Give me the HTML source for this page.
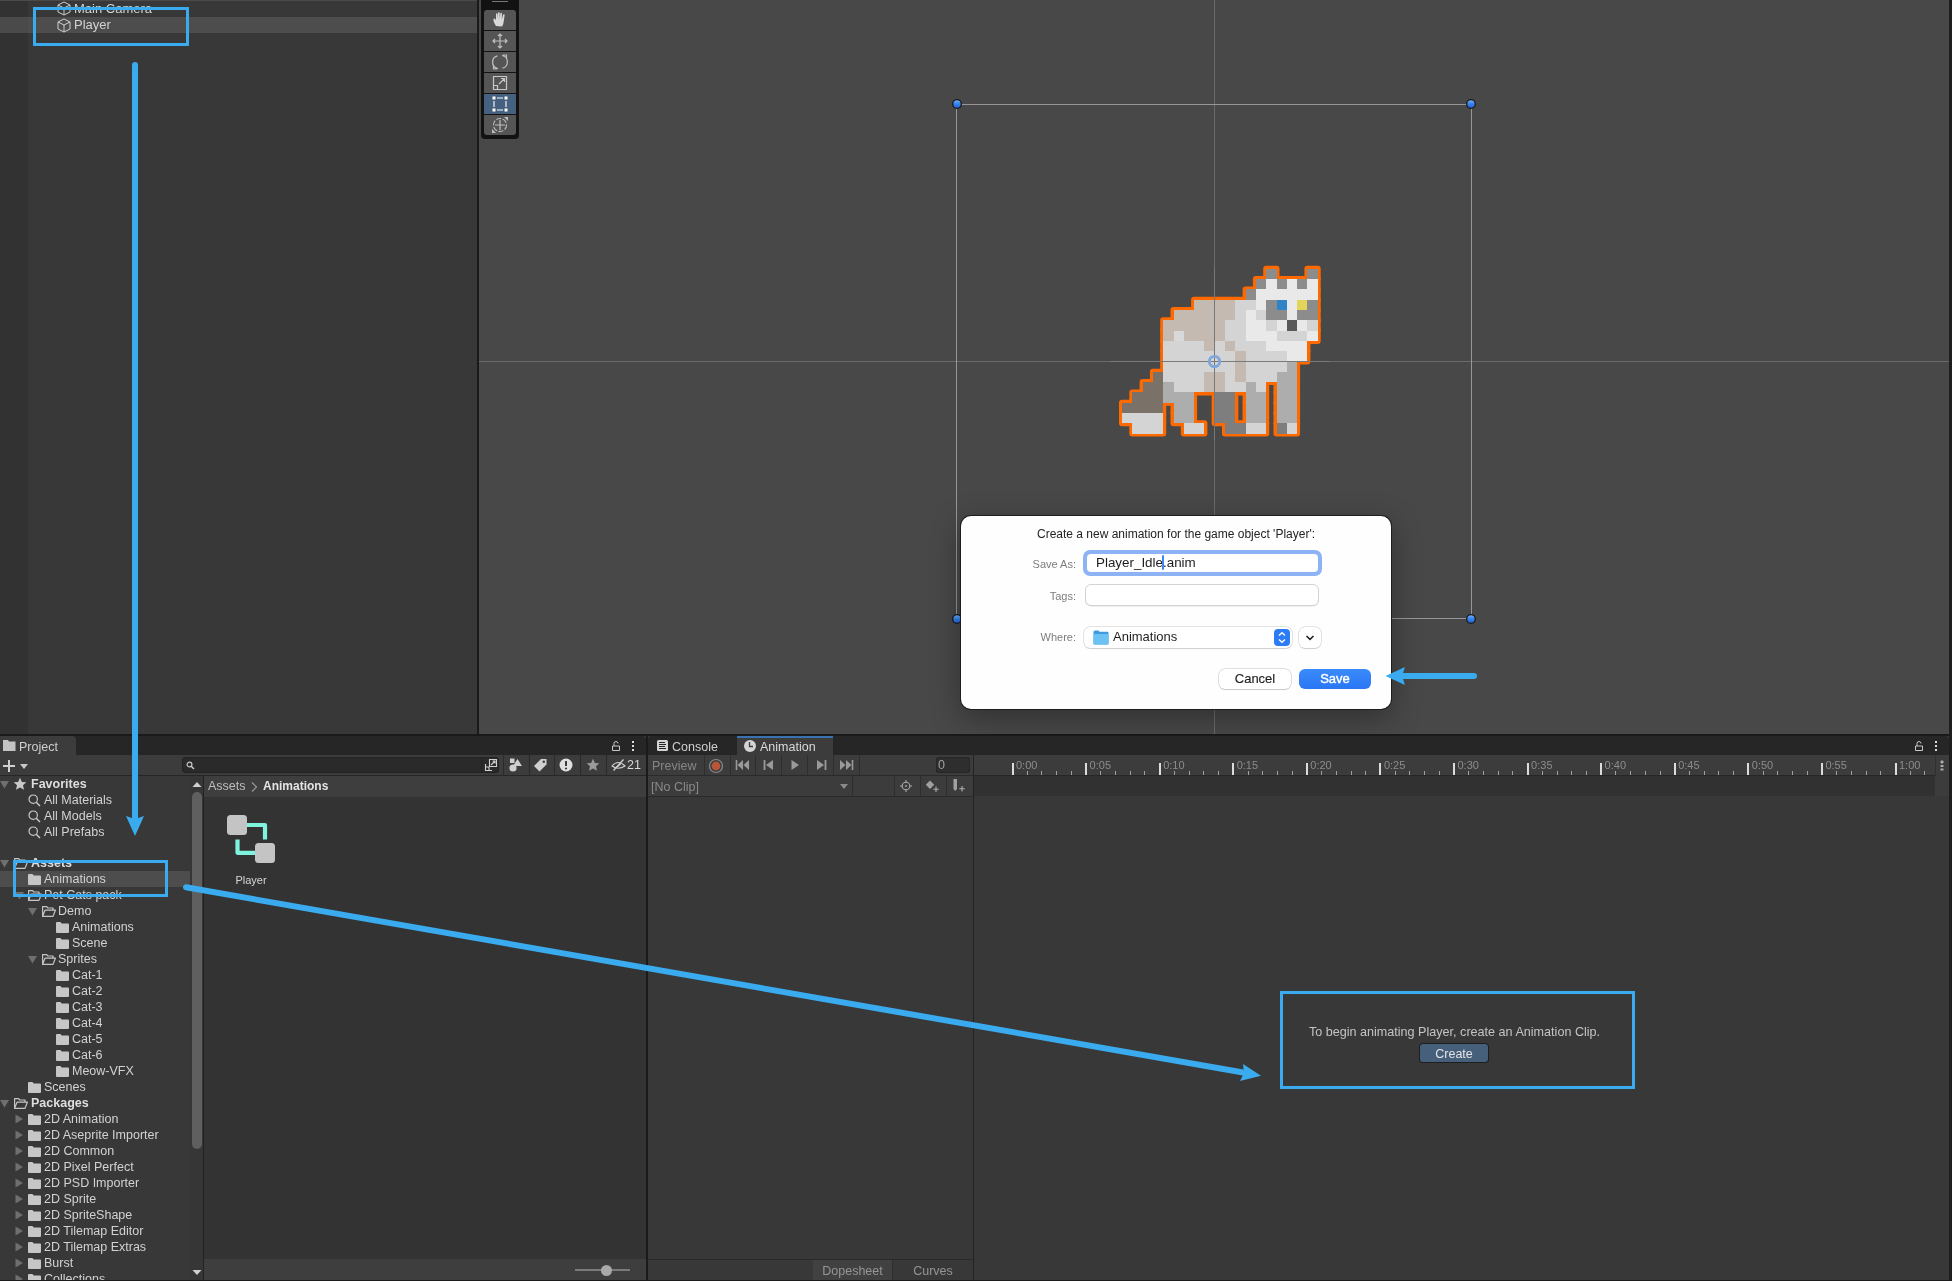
<!DOCTYPE html>
<html><head><meta charset="utf-8">
<style>
*{margin:0;padding:0;box-sizing:border-box}
html,body{width:1952px;height:1281px;overflow:hidden;background:#1a1a1a;font-family:"Liberation Sans",sans-serif;}
.a{position:absolute}
.t{position:absolute;white-space:nowrap;color:#d2d2d2;font-size:12.5px;line-height:16px;-webkit-font-smoothing:antialiased}
body>*{will-change:transform}
.s{position:absolute;overflow:hidden}
svg{position:absolute;overflow:visible}
</style></head><body>

<!-- ================= HIERARCHY ================= -->
<div class="s" style="left:0;top:0;width:477px;height:734px;background:#383838">
  <div class="a" style="left:0;top:0;width:28px;height:734px;background:#323232"></div>
  <div class="a" style="left:0;top:0;width:477px;height:1px;background:#4a4a4a"></div>
  <div class="a" style="left:0;top:17px;width:477px;height:16px;background:#4d4d4d"></div>
  <div class="a" style="left:0;top:17px;width:28px;height:16px;background:#4a4a4a"></div>
  <svg style="left:57px;top:1px" width="14" height="15" viewBox="0 0 14 15"><path d="M7 1 L13 4 L13 11 L7 14 L1 11 L1 4 Z M1 4 L7 7 L13 4 M7 7 L7 14" fill="none" stroke="#cfcfcf" stroke-width="1"/></svg>
  <div class="t" style="left:74px;top:1px;font-size:13px">Main Camera</div>
  <svg style="left:57px;top:18px" width="14" height="15" viewBox="0 0 14 15"><path d="M7 1 L13 4 L13 11 L7 14 L1 11 L1 4 Z M1 4 L7 7 L13 4 M7 7 L7 14" fill="none" stroke="#cfcfcf" stroke-width="1"/></svg>
  <div class="t" style="left:74px;top:17px;font-size:13px">Player</div>
</div>

<!-- ================= SCENE ================= -->
<div class="s" style="left:479px;top:0;width:1470px;height:734px;background:#484848">
  <div class="a" style="left:0;top:361px;width:1470px;height:1px;background:#6a6a6a"></div>
  <div class="a" style="left:735px;top:0;width:1px;height:734px;background:#6a6a6a"></div>
  <!-- tool strip -->
  <div class="a" style="left:2px;top:-4px;width:38px;height:143px;background:#121212;border-radius:4px"></div>
  <div class="a" style="left:13px;top:1px;width:16px;height:1px;background:#777"></div>
  <div class="a" style="left:5px;top:10px;width:32px;height:20px;background:#555555;border-radius:3px 3px 0 0"></div>
  <div class="a" style="left:5px;top:31px;width:32px;height:20px;background:#555555"></div>
  <div class="a" style="left:5px;top:52px;width:32px;height:20px;background:#555555"></div>
  <div class="a" style="left:5px;top:73px;width:32px;height:20px;background:#555555"></div>
  <div class="a" style="left:5px;top:94px;width:32px;height:20px;background:#46607f"></div>
  <div class="a" style="left:5px;top:115px;width:32px;height:20px;background:#555555;border-radius:0 0 3px 3px"></div>
  <!-- hand -->
  <svg style="left:13px;top:11px" width="16" height="17" viewBox="0 0 16 17"><path d="M4 15 C2 12 1 9 1.5 8 C2 7 3 7.5 4 9 L4 3 C4 2 5.5 2 5.5 3 L5.5 8 L6 2 C6 1 7.7 1 7.7 2 L7.7 8 L8.3 2.5 C8.5 1.5 10 1.6 10 2.6 L9.8 8.5 L11 4 C11.3 3 12.8 3.2 12.6 4.3 L11.8 10 C11.5 13 10.5 15 10 15.5 Z" fill="#d8d8d8"/></svg>
  <!-- move -->
  <svg style="left:13px;top:33px" width="16" height="16" viewBox="0 0 16 16"><path d="M8 1 V15 M1 8 H15 M6 3 L8 1 L10 3 M6 13 L8 15 L10 13 M3 6 L1 8 L3 10 M13 6 L15 8 L13 10" fill="none" stroke="#c0c0c0" stroke-width="1.2"/></svg>
  <!-- rotate -->
  <svg style="left:13px;top:54px" width="16" height="16" viewBox="0 0 16 16"><path d="M6 14.5 A6.5 6.5 0 0 1 5.5 1.8 M10 1.5 A6.5 6.5 0 0 1 10.5 14.2 M1.5 12 L1.5 15 L5 15 M14.5 4 L14.5 1 L11 1" fill="none" stroke="#c0c0c0" stroke-width="1.2"/></svg>
  <!-- scale -->
  <svg style="left:13px;top:75px" width="16" height="16" viewBox="0 0 16 16"><path d="M1.5 1.5 H14.5 V14.5 H1.5 Z M1.5 10.5 H5.5 V14.5 M7 9 L12.5 3.5 M9 3.5 H12.5 V7" fill="none" stroke="#c8c8c8" stroke-width="1.2"/></svg>
  <!-- rect -->
  <svg style="left:13px;top:96px" width="16" height="16" viewBox="0 0 16 16"><path d="M5 2 H11 M5 14 H11 M2 5 V11 M14 5 V11" stroke="#fff" stroke-width="1.1"/><rect x="0.5" y="0.5" width="3" height="3" fill="#fff"/><rect x="12.5" y="0.5" width="3" height="3" fill="#fff"/><rect x="0.5" y="12.5" width="3" height="3" fill="#fff"/><rect x="12.5" y="12.5" width="3" height="3" fill="#fff"/></svg>
  <!-- transform -->
  <svg style="left:13px;top:117px" width="16" height="16" viewBox="0 0 16 16"><circle cx="8" cy="8" r="6.5" fill="none" stroke="#bdbdbd" stroke-width="1.1" stroke-dasharray="5 1.5"/><path d="M8 3 V13 M3 8 H13" stroke="#bdbdbd" stroke-width="1.2"/><path d="M0 16 L4 16 L0 12 Z M16 0 L12 0 L16 4 Z" fill="#bdbdbd"/></svg>
</div>

<!-- rect tool frame -->
<svg style="left:0;top:0" width="1952" height="734">
  <rect x="956.5" y="104.5" width="515" height="514" fill="none" stroke="#979797" stroke-width="1"/>
  <defs><linearGradient id="hg" x1="0" y1="0" x2="0" y2="1"><stop offset="0" stop-color="#7ab8ff"/><stop offset="0.45" stop-color="#3a86ee"/><stop offset="1" stop-color="#1f5fdc"/></linearGradient></defs><g stroke="#1a1a1a" stroke-width="1.3" fill="url(#hg)">
    <circle cx="957" cy="104" r="4.3"/><circle cx="1471" cy="104" r="4.3"/>
    <circle cx="957" cy="619" r="4.3"/><circle cx="1471" cy="619" r="4.3"/>
  </g>
</svg>
<svg class="a" style="left:0;top:0" width="1952" height="734"><g fill="#ff6a00"><rect x="1263.2" y="265.8" width="16.3" height="16.3" rx="3"/><rect x="1304.4" y="265.8" width="16.3" height="16.3" rx="3"/><rect x="1252.9" y="276.1" width="67.8" height="16.3" rx="3"/><rect x="1242.6" y="286.4" width="78.1" height="16.3" rx="3"/><rect x="1191.1" y="296.7" width="129.6" height="16.3" rx="3"/><rect x="1170.5" y="307.0" width="150.2" height="16.3" rx="3"/><rect x="1160.2" y="317.3" width="160.5" height="16.3" rx="3"/><rect x="1160.2" y="327.6" width="160.5" height="16.3" rx="3"/><rect x="1160.2" y="337.9" width="150.2" height="16.3" rx="3"/><rect x="1160.2" y="348.2" width="150.2" height="16.3" rx="3"/><rect x="1160.2" y="358.5" width="139.9" height="16.3" rx="3"/><rect x="1149.9" y="368.8" width="150.2" height="16.3" rx="3"/><rect x="1139.6" y="379.1" width="129.6" height="16.3" rx="3"/><rect x="1273.5" y="379.1" width="26.6" height="16.3" rx="3"/><rect x="1129.3" y="389.4" width="67.8" height="16.3" rx="3"/><rect x="1211.7" y="389.4" width="26.6" height="16.3" rx="3"/><rect x="1242.6" y="389.4" width="26.6" height="16.3" rx="3"/><rect x="1273.5" y="389.4" width="26.6" height="16.3" rx="3"/><rect x="1119.0" y="399.7" width="47.2" height="16.3" rx="3"/><rect x="1170.5" y="399.7" width="26.6" height="16.3" rx="3"/><rect x="1211.7" y="399.7" width="26.6" height="16.3" rx="3"/><rect x="1242.6" y="399.7" width="26.6" height="16.3" rx="3"/><rect x="1273.5" y="399.7" width="26.6" height="16.3" rx="3"/><rect x="1119.0" y="410.0" width="47.2" height="16.3" rx="3"/><rect x="1170.5" y="410.0" width="26.6" height="16.3" rx="3"/><rect x="1211.7" y="410.0" width="26.6" height="16.3" rx="3"/><rect x="1242.6" y="410.0" width="26.6" height="16.3" rx="3"/><rect x="1273.5" y="410.0" width="26.6" height="16.3" rx="3"/><rect x="1129.3" y="420.3" width="36.9" height="16.3" rx="3"/><rect x="1180.8" y="420.3" width="26.6" height="16.3" rx="3"/><rect x="1222.0" y="420.3" width="47.2" height="16.3" rx="3"/><rect x="1273.5" y="420.3" width="26.6" height="16.3" rx="3"/></g><g shape-rendering="crispEdges"><rect x="1266.20" y="268.80" width="10.30" height="10.30" fill="#8c8c8c"/><rect x="1307.40" y="268.80" width="10.30" height="10.30" fill="#8c8c8c"/><rect x="1255.90" y="279.10" width="10.30" height="10.30" fill="#8c8c8c"/><rect x="1266.20" y="279.10" width="10.30" height="10.30" fill="#e9e9e9"/><rect x="1276.50" y="279.10" width="10.30" height="10.30" fill="#8c8c8c"/><rect x="1286.80" y="279.10" width="10.30" height="10.30" fill="#e9e9e9"/><rect x="1297.10" y="279.10" width="10.30" height="10.30" fill="#8c8c8c"/><rect x="1307.40" y="279.10" width="10.30" height="10.30" fill="#e9e9e9"/><rect x="1245.60" y="289.40" width="10.30" height="10.30" fill="#8c8c8c"/><rect x="1255.90" y="289.40" width="61.80" height="10.30" fill="#e9e9e9"/><rect x="1194.10" y="299.70" width="41.20" height="10.30" fill="#c4bab1"/><rect x="1235.30" y="299.70" width="20.60" height="10.30" fill="#d4d4d4"/><rect x="1255.90" y="299.70" width="10.30" height="10.30" fill="#e9e9e9"/><rect x="1266.20" y="299.70" width="10.30" height="10.30" fill="#8c8c8c"/><rect x="1276.50" y="299.70" width="10.30" height="10.30" fill="#2e84c6"/><rect x="1286.80" y="299.70" width="10.30" height="10.30" fill="#e9e9e9"/><rect x="1297.10" y="299.70" width="10.30" height="10.30" fill="#e2d55a"/><rect x="1307.40" y="299.70" width="10.30" height="10.30" fill="#8c8c8c"/><rect x="1173.50" y="310.00" width="61.80" height="10.30" fill="#c4bab1"/><rect x="1235.30" y="310.00" width="10.30" height="10.30" fill="#d4d4d4"/><rect x="1245.60" y="310.00" width="10.30" height="10.30" fill="#e9e9e9"/><rect x="1255.90" y="310.00" width="10.30" height="10.30" fill="#d4d4d4"/><rect x="1266.20" y="310.00" width="20.60" height="10.30" fill="#8c8c8c"/><rect x="1286.80" y="310.00" width="10.30" height="10.30" fill="#e9e9e9"/><rect x="1297.10" y="310.00" width="20.60" height="10.30" fill="#8c8c8c"/><rect x="1163.20" y="320.30" width="61.80" height="10.30" fill="#c4bab1"/><rect x="1225.00" y="320.30" width="20.60" height="10.30" fill="#d4d4d4"/><rect x="1245.60" y="320.30" width="20.60" height="10.30" fill="#e9e9e9"/><rect x="1266.20" y="320.30" width="10.30" height="10.30" fill="#d4d4d4"/><rect x="1276.50" y="320.30" width="10.30" height="10.30" fill="#e9e9e9"/><rect x="1286.80" y="320.30" width="10.30" height="10.30" fill="#595959"/><rect x="1297.10" y="320.30" width="10.30" height="10.30" fill="#e9e9e9"/><rect x="1307.40" y="320.30" width="10.30" height="10.30" fill="#d4d4d4"/><rect x="1163.20" y="330.60" width="10.30" height="10.30" fill="#c4bab1"/><rect x="1173.50" y="330.60" width="10.30" height="10.30" fill="#d9d9d9"/><rect x="1183.80" y="330.60" width="41.20" height="10.30" fill="#c4bab1"/><rect x="1225.00" y="330.60" width="20.60" height="10.30" fill="#d4d4d4"/><rect x="1245.60" y="330.60" width="30.90" height="10.30" fill="#e9e9e9"/><rect x="1276.50" y="330.60" width="30.90" height="10.30" fill="#d4d4d4"/><rect x="1307.40" y="330.60" width="10.30" height="10.30" fill="#e9e9e9"/><rect x="1163.20" y="340.90" width="41.20" height="10.30" fill="#d4d4d4"/><rect x="1204.40" y="340.90" width="10.30" height="10.30" fill="#c4bab1"/><rect x="1214.70" y="340.90" width="10.30" height="10.30" fill="#d4d4d4"/><rect x="1225.00" y="340.90" width="10.30" height="10.30" fill="#c4bab1"/><rect x="1235.30" y="340.90" width="30.90" height="10.30" fill="#d4d4d4"/><rect x="1266.20" y="340.90" width="41.20" height="10.30" fill="#e9e9e9"/><rect x="1163.20" y="351.20" width="72.10" height="10.30" fill="#d4d4d4"/><rect x="1235.30" y="351.20" width="10.30" height="10.30" fill="#c4bab1"/><rect x="1245.60" y="351.20" width="41.20" height="10.30" fill="#d4d4d4"/><rect x="1286.80" y="351.20" width="20.60" height="10.30" fill="#e9e9e9"/><rect x="1163.20" y="361.50" width="72.10" height="10.30" fill="#d4d4d4"/><rect x="1235.30" y="361.50" width="10.30" height="10.30" fill="#c4bab1"/><rect x="1245.60" y="361.50" width="41.20" height="10.30" fill="#d4d4d4"/><rect x="1286.80" y="361.50" width="10.30" height="10.30" fill="#adadad"/><rect x="1152.90" y="371.80" width="10.30" height="10.30" fill="#7a7168"/><rect x="1163.20" y="371.80" width="41.20" height="10.30" fill="#d4d4d4"/><rect x="1204.40" y="371.80" width="20.60" height="10.30" fill="#c4bab1"/><rect x="1225.00" y="371.80" width="10.30" height="10.30" fill="#d4d4d4"/><rect x="1235.30" y="371.80" width="10.30" height="10.30" fill="#c4bab1"/><rect x="1245.60" y="371.80" width="30.90" height="10.30" fill="#d4d4d4"/><rect x="1276.50" y="371.80" width="20.60" height="10.30" fill="#adadad"/><rect x="1142.60" y="382.10" width="20.60" height="10.30" fill="#7a7168"/><rect x="1163.20" y="382.10" width="10.30" height="10.30" fill="#adadad"/><rect x="1173.50" y="382.10" width="30.90" height="10.30" fill="#d4d4d4"/><rect x="1204.40" y="382.10" width="20.60" height="10.30" fill="#c4bab1"/><rect x="1225.00" y="382.10" width="20.60" height="10.30" fill="#d4d4d4"/><rect x="1245.60" y="382.10" width="10.30" height="10.30" fill="#adadad"/><rect x="1255.90" y="382.10" width="10.30" height="10.30" fill="#d4d4d4"/><rect x="1276.50" y="382.10" width="20.60" height="10.30" fill="#adadad"/><rect x="1132.30" y="392.40" width="30.90" height="10.30" fill="#7a7168"/><rect x="1163.20" y="392.40" width="30.90" height="10.30" fill="#adadad"/><rect x="1214.70" y="392.40" width="20.60" height="10.30" fill="#7e7e7e"/><rect x="1245.60" y="392.40" width="20.60" height="10.30" fill="#adadad"/><rect x="1276.50" y="392.40" width="20.60" height="10.30" fill="#adadad"/><rect x="1122.00" y="402.70" width="41.20" height="10.30" fill="#7a7168"/><rect x="1173.50" y="402.70" width="20.60" height="10.30" fill="#adadad"/><rect x="1214.70" y="402.70" width="20.60" height="10.30" fill="#7e7e7e"/><rect x="1245.60" y="402.70" width="20.60" height="10.30" fill="#adadad"/><rect x="1276.50" y="402.70" width="20.60" height="10.30" fill="#adadad"/><rect x="1122.00" y="413.00" width="41.20" height="10.30" fill="#d4d4d4"/><rect x="1173.50" y="413.00" width="20.60" height="10.30" fill="#adadad"/><rect x="1214.70" y="413.00" width="20.60" height="10.30" fill="#7e7e7e"/><rect x="1245.60" y="413.00" width="20.60" height="10.30" fill="#adadad"/><rect x="1276.50" y="413.00" width="20.60" height="10.30" fill="#adadad"/><rect x="1132.30" y="423.30" width="30.90" height="10.30" fill="#d4d4d4"/><rect x="1183.80" y="423.30" width="20.60" height="10.30" fill="#d4d4d4"/><rect x="1225.00" y="423.30" width="20.60" height="10.30" fill="#7e7e7e"/><rect x="1245.60" y="423.30" width="20.60" height="10.30" fill="#d4d4d4"/><rect x="1276.50" y="423.30" width="10.30" height="10.30" fill="#7e7e7e"/><rect x="1286.80" y="423.30" width="10.30" height="10.30" fill="#d4d4d4"/></g></svg>
<svg style="left:0;top:0" width="1952" height="734">
  <line x1="1214.5" y1="268" x2="1214.5" y2="440" stroke="#777" stroke-width="1"/>
  <line x1="1110" y1="361.5" x2="1330" y2="361.5" stroke="#7a7a7a" stroke-width="1"/>
  <circle cx="1214.5" cy="361.5" r="5.2" fill="none" stroke="#7ea6dc" stroke-width="2.8"/>
</svg>

<!-- ================= DIALOG ================= -->
<div class="a" style="left:961px;top:516px;width:430px;height:193px;background:#fefefe;border-radius:10px;box-shadow:0 0 0 1px #1e1e1e,0 8px 30px rgba(0,0,0,0.35)"></div>

<!-- dialog content -->
<div class="t" style="left:961px;width:430px;text-align:center;top:526px;font-size:12px;color:#232323">Create a new animation for the game object 'Player':</div>
<div class="t" style="left:990px;width:86px;text-align:right;top:556px;font-size:11px;color:#7d7d7d">Save As:</div>
<div class="a" style="left:1083px;top:550px;width:239px;height:26px;border-radius:7px;background:#8db3f5"></div>
<div class="a" style="left:1087px;top:554px;width:231px;height:18px;border-radius:4px;background:#fff"></div>
<div class="t" style="left:1096px;top:555px;font-size:13.4px;color:#1c1c1c">Player_Idle.anim</div>
<div class="a" style="left:1161.5px;top:555px;width:2px;height:15px;background:#3f86f4;border-radius:1px"></div>
<div class="t" style="left:990px;width:86px;text-align:right;top:588px;font-size:11px;color:#7d7d7d">Tags:</div>
<div class="a" style="left:1085px;top:584px;width:234px;height:22px;border-radius:6px;background:#fff;border:1px solid #d3d3d3;box-shadow:0 0.5px 0.5px rgba(0,0,0,0.12)"></div>
<div class="t" style="left:990px;width:86px;text-align:right;top:629px;font-size:11px;color:#7d7d7d">Where:</div>
<div class="a" style="left:1084px;top:627px;width:208px;height:21px;border-radius:6px;background:#fff;box-shadow:0 0 0 0.5px #c8c8c8,0 1px 1px rgba(0,0,0,0.15)"></div>
<svg style="left:1093px;top:630px" width="16" height="15" viewBox="0 0 16 15"><path d="M0.5 2 Q0.5 0.5 2 0.5 L5.5 0.5 L6.5 1.8 L14.5 1.8 Q15.5 1.8 15.5 3 L15.5 13.5 Q15.5 14.5 14.5 14.5 L1.5 14.5 Q0.5 14.5 0.5 13.5 Z" fill="#3f9ae0"/><path d="M0.5 4 L15.5 4 L15.5 13.5 Q15.5 14.5 14.5 14.5 L1.5 14.5 Q0.5 14.5 0.5 13.5 Z" fill="#6cc3f3"/></svg>
<div class="t" style="left:1113px;top:629px;font-size:13px;color:#1e1e1e">Animations</div>
<div class="a" style="left:1274px;top:629px;width:16px;height:17px;border-radius:4px;background:#2c7cf6"></div>
<svg style="left:1274px;top:629px" width="16" height="17" viewBox="0 0 16 17"><path d="M5 6.5 L8 3.8 L11 6.5 M5 10.5 L8 13.2 L11 10.5" fill="none" stroke="#fff" stroke-width="1.4"/></svg>
<div class="a" style="left:1299px;top:627px;width:22px;height:21px;border-radius:6px;background:#fff;box-shadow:0 0 0 0.5px #c8c8c8,0 1px 1px rgba(0,0,0,0.15)"></div>
<svg style="left:1299px;top:627px" width="22" height="21" viewBox="0 0 22 21"><path d="M7.5 9 L11 12.3 L14.5 9" fill="none" stroke="#222" stroke-width="1.6"/></svg>
<div class="a" style="left:1219px;top:669px;width:72px;height:20px;border-radius:6px;background:#fff;box-shadow:0 0 0 0.5px #c3c3c3,0 1px 1px rgba(0,0,0,0.18)"></div>
<div class="t" style="left:1219px;width:72px;text-align:center;top:671px;font-size:13px;color:#1e1e1e;-webkit-text-stroke:0.15px #1e1e1e">Cancel</div>
<div class="a" style="left:1299px;top:669px;width:72px;height:20px;border-radius:6px;background:linear-gradient(#3a8bfb,#2a76f5)"></div>
<div class="t" style="left:1299px;width:72px;text-align:center;top:671px;font-size:13px;color:#fff;-webkit-text-stroke:0.4px #fff">Save</div>

<!-- ================= PROJECT PANEL ================= -->
<div class="s" style="left:0;top:736px;width:646px;height:545px;background:#383838">
  <div class="a" style="left:0;top:0;width:646px;height:19px;background:#262626;border-radius:0 4px 0 0"></div>
  <div class="a" style="left:0;top:0;width:76px;height:19px;background:#3c3c3c;border-radius:0 4px 0 0"></div>
  <svg style="left:3px;top:4px" width="13" height="11" viewBox="0 0 13 11"><path d="M0 0 L5 0 L6 1.5 L12.5 1.5 L12.5 11 L0 11 Z" fill="#c4c4c4"/></svg>
  <div class="t" style="left:19px;top:3px;font-size:12.5px;color:#cfcfcf">Project</div>
  <svg style="left:611px;top:4px" width="10" height="11" viewBox="0 0 10 11"><path d="M1.5 10.5 V6 H8.5 V10.5 Z M3 6 V3.5 A2 2 0 0 1 7 3.5" fill="none" stroke="#c8c8c8" stroke-width="1"/></svg>
  <div class="a" style="left:632px;top:5px;width:2px;height:2px;background:#ddd"></div>
  <div class="a" style="left:632px;top:9px;width:2px;height:2px;background:#ddd"></div>
  <div class="a" style="left:632px;top:13px;width:2px;height:2px;background:#ddd"></div>
  <!-- toolbar -->
  <div class="a" style="left:0;top:19px;width:646px;height:20px;background:#3c3c3c"></div>
  <div class="a" style="left:0;top:39px;width:646px;height:1px;background:#262626"></div>
  <svg style="left:3px;top:23px" width="26" height="14" viewBox="0 0 26 14"><path d="M6 1 V13 M0 7 H12" stroke="#d0d0d0" stroke-width="2"/><path d="M17 5 L25 5 L21 10 Z" fill="#c8c8c8"/></svg>
  <div class="a" style="left:182px;top:21px;width:317px;height:16px;border-radius:4px;background:#2a2a2a;box-shadow:inset 0 0 0 1px #232323"></div>
  <svg style="left:186px;top:25px" width="9" height="9" viewBox="0 0 9 9"><circle cx="3.5" cy="3.5" r="2.4" fill="none" stroke="#c8c8c8" stroke-width="1.2"/><path d="M5 5 L8 8" stroke="#c8c8c8" stroke-width="1.5"/></svg>
  <div class="a" style="left:481px;top:22px;width:1px;height:14px;background:#232323"></div>
  <svg style="left:484px;top:22px" width="14" height="14" viewBox="0 0 14 14"><path d="M1.5 6 V12.5 H8 M5.5 1.5 H12.5 V8.5 H5.5 Z M1.5 9 H5 V12.5 M7 7 L11 3 M8.5 3 H11 V5.5" fill="none" stroke="#cfcfcf" stroke-width="1.1"/></svg>
  <div class="a" style="left:503px;top:19px;width:1px;height:20px;background:#2a2a2a"></div>
  <div class="a" style="left:529px;top:19px;width:1px;height:20px;background:#2a2a2a"></div>
  <div class="a" style="left:554px;top:19px;width:1px;height:20px;background:#2a2a2a"></div>
  <div class="a" style="left:580px;top:19px;width:1px;height:20px;background:#2a2a2a"></div>
  <div class="a" style="left:606px;top:19px;width:1px;height:20px;background:#2a2a2a"></div>
  <svg style="left:508px;top:22px" width="15" height="14" viewBox="0 0 15 14"><path d="M2 0.5 H6.5 V5 H2 Z" fill="#cfcfcf"/><path d="M9.5 1 L14 8 H5 Z" fill="#cfcfcf"/><circle cx="5" cy="10" r="3.6" fill="#cfcfcf"/></svg>
  <svg style="left:533px;top:22px" width="15" height="14" viewBox="0 0 15 14"><path d="M8 1 H13.5 V6.5 L6.5 13.5 L1 8 Z" fill="#d0d0d0"/><circle cx="10.8" cy="3.8" r="1.2" fill="#3c3c3c"/></svg>
  <svg style="left:559px;top:22px" width="14" height="14" viewBox="0 0 14 14"><circle cx="7" cy="7" r="6.5" fill="#e0e0e0"/><path d="M7 3 V8" stroke="#3c3c3c" stroke-width="2"/><circle cx="7" cy="10.5" r="1.1" fill="#3c3c3c"/></svg>
  <svg style="left:586px;top:22px" width="14" height="14" viewBox="0 0 14 14"><path d="M7 0.8 L8.9 4.9 L13.3 5.3 L10 8.3 L11 12.7 L7 10.4 L3 12.7 L4 8.3 L0.7 5.3 L5.1 4.9 Z" fill="#9a9a9a"/></svg>
  <svg style="left:611px;top:22px" width="16" height="14" viewBox="0 0 16 14"><path d="M1 8 Q7 1 14 8 Q7 12.5 1 8 Z" fill="none" stroke="#cfcfcf" stroke-width="1.1"/><path d="M2.5 12.5 L12.5 1.5" stroke="#cfcfcf" stroke-width="1.3"/><path d="M6 9 L9.5 6" stroke="#cfcfcf" stroke-width="1.5"/></svg>
  <div class="t" style="left:627px;top:21px;font-size:12.5px;color:#d8d8d8">21</div>
  <!-- tree -->
  <div class="a" style="left:190px;top:40px;width:13px;height:505px;background:#363636"></div>
  <div class="a" style="left:192px;top:56px;width:10px;height:357px;background:#5f5f5f;border-radius:5px"></div>
  <svg style="left:192px;top:45px" width="10" height="8" viewBox="0 0 10 8"><path d="M0.5 6 L5 1 L9.5 6 Z" fill="#d0d0d0"/></svg>
  <svg style="left:192px;top:532px" width="10" height="8" viewBox="0 0 10 8"><path d="M0.5 2 L5 7 L9.5 2 Z" fill="#d0d0d0"/></svg>
  <div class="a" style="left:203px;top:40px;width:1px;height:505px;background:#222"></div>
  <div class="a" style="left:204px;top:40px;width:442px;height:505px;background:#333333"></div>
  <div class="a" style="left:204px;top:40px;width:442px;height:21px;background:#3e3e3e"></div>
  <div class="t" style="left:208px;top:42px;font-size:12.5px;color:#bdbdbd">Assets</div>
  <svg style="left:250px;top:45px" width="8" height="12" viewBox="0 0 8 12"><path d="M2 1.5 L6.5 6 L2 10.5" fill="none" stroke="#9a9a9a" stroke-width="1.2"/></svg>
  <div class="t" style="left:263px;top:42px;font-size:12px;color:#e4e4e4;font-weight:bold">Animations</div>
  <!-- asset icon -->
  <svg style="left:226px;top:814px;top:78px" width="52" height="52" viewBox="0 0 52 52"><path d="M20 11 H39 V25.5 M11.5 25.5 V38.8 H29" fill="none" stroke="#7ff3dd" stroke-width="4.2" stroke-linejoin="round"/><rect x="1" y="1" width="20" height="20" rx="3.5" fill="#c4c4c4"/><rect x="29" y="29" width="20" height="20" rx="3.5" fill="#c4c4c4"/></svg>
  <div class="t" style="left:201px;width:100px;text-align:center;top:136px;font-size:11px;color:#d6d6d6">Player</div>
<div class="s" style="left:0;top:40px;width:190px;height:505px"><div class="a" style="left:0;top:1px;width:190px;height:505px">
<div class="a" style="left:0;top:94px;width:190px;height:16px;background:#4d4d4d"></div>
<svg style="left:0px;top:3px" width="10" height="9" viewBox="0 0 10 9"><path d="M0 1 L9 1 L4.5 8.5 Z" fill="#6f6f6f"/></svg>
<svg style="left:13px;top:0px" width="14" height="14" viewBox="0 0 14 14"><path d="M7 0.8 L8.9 4.9 L13.3 5.3 L10 8.3 L11 12.7 L7 10.4 L3 12.7 L4 8.3 L0.7 5.3 L5.1 4.9 Z" fill="#c8c8c8"/></svg>
<div class="t" style="left:31px;top:-1px;font-weight:bold;color:#dedede">Favorites</div>
<svg style="left:28px;top:17px" width="13" height="13" viewBox="0 0 13 13"><circle cx="5.2" cy="5.2" r="4.2" fill="none" stroke="#c8c8c8" stroke-width="1.2"/><path d="M8.2 8.2 L12 12" stroke="#c8c8c8" stroke-width="1.5"/></svg>
<div class="t" style="left:44px;top:15px;">All Materials</div>
<svg style="left:28px;top:33px" width="13" height="13" viewBox="0 0 13 13"><circle cx="5.2" cy="5.2" r="4.2" fill="none" stroke="#c8c8c8" stroke-width="1.2"/><path d="M8.2 8.2 L12 12" stroke="#c8c8c8" stroke-width="1.5"/></svg>
<div class="t" style="left:44px;top:31px;">All Models</div>
<svg style="left:28px;top:49px" width="13" height="13" viewBox="0 0 13 13"><circle cx="5.2" cy="5.2" r="4.2" fill="none" stroke="#c8c8c8" stroke-width="1.2"/><path d="M8.2 8.2 L12 12" stroke="#c8c8c8" stroke-width="1.5"/></svg>
<div class="t" style="left:44px;top:47px;">All Prefabs</div>
<svg style="left:0px;top:82px" width="10" height="9" viewBox="0 0 10 9"><path d="M0 1 L9 1 L4.5 8.5 Z" fill="#6f6f6f"/></svg>
<svg style="left:14px;top:81px" width="14" height="11" viewBox="0 0 14 11"><path d="M0.6 10.4 L0.6 0.6 L4.6 0.6 L5.8 2 L11 2 L11 4.2 M0.6 10.4 L3 4.2 L13.4 4.2 L11 10.4 Z" fill="none" stroke="#c6c6c6" stroke-width="1.2" stroke-linejoin="round"/></svg>
<div class="t" style="left:31px;top:78px;font-weight:bold;color:#dedede">Assets</div>
<svg style="left:28px;top:97px" width="13" height="11" viewBox="0 0 13 11"><path d="M0 1 Q0 0 1 0 L4.5 0 L5.7 1.5 L12 1.5 Q13 1.5 13 2.5 L13 10 Q13 11 12 11 L1 11 Q0 11 0 10 Z" fill="#c6c6c6"/></svg>
<div class="t" style="left:44px;top:94px;">Animations</div>
<svg style="left:15px;top:114px" width="10" height="9" viewBox="0 0 10 9"><path d="M0 1 L9 1 L4.5 8.5 Z" fill="#6f6f6f"/></svg>
<svg style="left:28px;top:113px" width="14" height="11" viewBox="0 0 14 11"><path d="M0.6 10.4 L0.6 0.6 L4.6 0.6 L5.8 2 L11 2 L11 4.2 M0.6 10.4 L3 4.2 L13.4 4.2 L11 10.4 Z" fill="none" stroke="#c6c6c6" stroke-width="1.2" stroke-linejoin="round"/></svg>
<div class="t" style="left:44px;top:110px;">Pet Cats pack</div>
<svg style="left:28px;top:130px" width="10" height="9" viewBox="0 0 10 9"><path d="M0 1 L9 1 L4.5 8.5 Z" fill="#6f6f6f"/></svg>
<svg style="left:42px;top:129px" width="14" height="11" viewBox="0 0 14 11"><path d="M0.6 10.4 L0.6 0.6 L4.6 0.6 L5.8 2 L11 2 L11 4.2 M0.6 10.4 L3 4.2 L13.4 4.2 L11 10.4 Z" fill="none" stroke="#c6c6c6" stroke-width="1.2" stroke-linejoin="round"/></svg>
<div class="t" style="left:58px;top:126px;">Demo</div>
<svg style="left:56px;top:145px" width="13" height="11" viewBox="0 0 13 11"><path d="M0 1 Q0 0 1 0 L4.5 0 L5.7 1.5 L12 1.5 Q13 1.5 13 2.5 L13 10 Q13 11 12 11 L1 11 Q0 11 0 10 Z" fill="#c6c6c6"/></svg>
<div class="t" style="left:72px;top:142px;">Animations</div>
<svg style="left:56px;top:161px" width="13" height="11" viewBox="0 0 13 11"><path d="M0 1 Q0 0 1 0 L4.5 0 L5.7 1.5 L12 1.5 Q13 1.5 13 2.5 L13 10 Q13 11 12 11 L1 11 Q0 11 0 10 Z" fill="#c6c6c6"/></svg>
<div class="t" style="left:72px;top:158px;">Scene</div>
<svg style="left:28px;top:178px" width="10" height="9" viewBox="0 0 10 9"><path d="M0 1 L9 1 L4.5 8.5 Z" fill="#6f6f6f"/></svg>
<svg style="left:42px;top:177px" width="14" height="11" viewBox="0 0 14 11"><path d="M0.6 10.4 L0.6 0.6 L4.6 0.6 L5.8 2 L11 2 L11 4.2 M0.6 10.4 L3 4.2 L13.4 4.2 L11 10.4 Z" fill="none" stroke="#c6c6c6" stroke-width="1.2" stroke-linejoin="round"/></svg>
<div class="t" style="left:58px;top:174px;">Sprites</div>
<svg style="left:56px;top:193px" width="13" height="11" viewBox="0 0 13 11"><path d="M0 1 Q0 0 1 0 L4.5 0 L5.7 1.5 L12 1.5 Q13 1.5 13 2.5 L13 10 Q13 11 12 11 L1 11 Q0 11 0 10 Z" fill="#c6c6c6"/></svg>
<div class="t" style="left:72px;top:190px;">Cat-1</div>
<svg style="left:56px;top:209px" width="13" height="11" viewBox="0 0 13 11"><path d="M0 1 Q0 0 1 0 L4.5 0 L5.7 1.5 L12 1.5 Q13 1.5 13 2.5 L13 10 Q13 11 12 11 L1 11 Q0 11 0 10 Z" fill="#c6c6c6"/></svg>
<div class="t" style="left:72px;top:206px;">Cat-2</div>
<svg style="left:56px;top:225px" width="13" height="11" viewBox="0 0 13 11"><path d="M0 1 Q0 0 1 0 L4.5 0 L5.7 1.5 L12 1.5 Q13 1.5 13 2.5 L13 10 Q13 11 12 11 L1 11 Q0 11 0 10 Z" fill="#c6c6c6"/></svg>
<div class="t" style="left:72px;top:222px;">Cat-3</div>
<svg style="left:56px;top:241px" width="13" height="11" viewBox="0 0 13 11"><path d="M0 1 Q0 0 1 0 L4.5 0 L5.7 1.5 L12 1.5 Q13 1.5 13 2.5 L13 10 Q13 11 12 11 L1 11 Q0 11 0 10 Z" fill="#c6c6c6"/></svg>
<div class="t" style="left:72px;top:238px;">Cat-4</div>
<svg style="left:56px;top:257px" width="13" height="11" viewBox="0 0 13 11"><path d="M0 1 Q0 0 1 0 L4.5 0 L5.7 1.5 L12 1.5 Q13 1.5 13 2.5 L13 10 Q13 11 12 11 L1 11 Q0 11 0 10 Z" fill="#c6c6c6"/></svg>
<div class="t" style="left:72px;top:254px;">Cat-5</div>
<svg style="left:56px;top:273px" width="13" height="11" viewBox="0 0 13 11"><path d="M0 1 Q0 0 1 0 L4.5 0 L5.7 1.5 L12 1.5 Q13 1.5 13 2.5 L13 10 Q13 11 12 11 L1 11 Q0 11 0 10 Z" fill="#c6c6c6"/></svg>
<div class="t" style="left:72px;top:270px;">Cat-6</div>
<svg style="left:56px;top:289px" width="13" height="11" viewBox="0 0 13 11"><path d="M0 1 Q0 0 1 0 L4.5 0 L5.7 1.5 L12 1.5 Q13 1.5 13 2.5 L13 10 Q13 11 12 11 L1 11 Q0 11 0 10 Z" fill="#c6c6c6"/></svg>
<div class="t" style="left:72px;top:286px;">Meow-VFX</div>
<svg style="left:28px;top:305px" width="13" height="11" viewBox="0 0 13 11"><path d="M0 1 Q0 0 1 0 L4.5 0 L5.7 1.5 L12 1.5 Q13 1.5 13 2.5 L13 10 Q13 11 12 11 L1 11 Q0 11 0 10 Z" fill="#c6c6c6"/></svg>
<div class="t" style="left:44px;top:302px;">Scenes</div>
<svg style="left:0px;top:322px" width="10" height="9" viewBox="0 0 10 9"><path d="M0 1 L9 1 L4.5 8.5 Z" fill="#6f6f6f"/></svg>
<svg style="left:14px;top:321px" width="14" height="11" viewBox="0 0 14 11"><path d="M0.6 10.4 L0.6 0.6 L4.6 0.6 L5.8 2 L11 2 L11 4.2 M0.6 10.4 L3 4.2 L13.4 4.2 L11 10.4 Z" fill="none" stroke="#c6c6c6" stroke-width="1.2" stroke-linejoin="round"/></svg>
<div class="t" style="left:31px;top:318px;font-weight:bold;color:#dedede">Packages</div>
<svg style="left:15px;top:337px" width="9" height="10" viewBox="0 0 9 10"><path d="M0.5 0.5 L8 5 L0.5 9.5 Z" fill="#6f6f6f"/></svg>
<svg style="left:28px;top:337px" width="13" height="11" viewBox="0 0 13 11"><path d="M0 1 Q0 0 1 0 L4.5 0 L5.7 1.5 L12 1.5 Q13 1.5 13 2.5 L13 10 Q13 11 12 11 L1 11 Q0 11 0 10 Z" fill="#c6c6c6"/></svg>
<div class="t" style="left:44px;top:334px;">2D Animation</div>
<svg style="left:15px;top:353px" width="9" height="10" viewBox="0 0 9 10"><path d="M0.5 0.5 L8 5 L0.5 9.5 Z" fill="#6f6f6f"/></svg>
<svg style="left:28px;top:353px" width="13" height="11" viewBox="0 0 13 11"><path d="M0 1 Q0 0 1 0 L4.5 0 L5.7 1.5 L12 1.5 Q13 1.5 13 2.5 L13 10 Q13 11 12 11 L1 11 Q0 11 0 10 Z" fill="#c6c6c6"/></svg>
<div class="t" style="left:44px;top:350px;">2D Aseprite Importer</div>
<svg style="left:15px;top:369px" width="9" height="10" viewBox="0 0 9 10"><path d="M0.5 0.5 L8 5 L0.5 9.5 Z" fill="#6f6f6f"/></svg>
<svg style="left:28px;top:369px" width="13" height="11" viewBox="0 0 13 11"><path d="M0 1 Q0 0 1 0 L4.5 0 L5.7 1.5 L12 1.5 Q13 1.5 13 2.5 L13 10 Q13 11 12 11 L1 11 Q0 11 0 10 Z" fill="#c6c6c6"/></svg>
<div class="t" style="left:44px;top:366px;">2D Common</div>
<svg style="left:15px;top:385px" width="9" height="10" viewBox="0 0 9 10"><path d="M0.5 0.5 L8 5 L0.5 9.5 Z" fill="#6f6f6f"/></svg>
<svg style="left:28px;top:385px" width="13" height="11" viewBox="0 0 13 11"><path d="M0 1 Q0 0 1 0 L4.5 0 L5.7 1.5 L12 1.5 Q13 1.5 13 2.5 L13 10 Q13 11 12 11 L1 11 Q0 11 0 10 Z" fill="#c6c6c6"/></svg>
<div class="t" style="left:44px;top:382px;">2D Pixel Perfect</div>
<svg style="left:15px;top:401px" width="9" height="10" viewBox="0 0 9 10"><path d="M0.5 0.5 L8 5 L0.5 9.5 Z" fill="#6f6f6f"/></svg>
<svg style="left:28px;top:401px" width="13" height="11" viewBox="0 0 13 11"><path d="M0 1 Q0 0 1 0 L4.5 0 L5.7 1.5 L12 1.5 Q13 1.5 13 2.5 L13 10 Q13 11 12 11 L1 11 Q0 11 0 10 Z" fill="#c6c6c6"/></svg>
<div class="t" style="left:44px;top:398px;">2D PSD Importer</div>
<svg style="left:15px;top:417px" width="9" height="10" viewBox="0 0 9 10"><path d="M0.5 0.5 L8 5 L0.5 9.5 Z" fill="#6f6f6f"/></svg>
<svg style="left:28px;top:417px" width="13" height="11" viewBox="0 0 13 11"><path d="M0 1 Q0 0 1 0 L4.5 0 L5.7 1.5 L12 1.5 Q13 1.5 13 2.5 L13 10 Q13 11 12 11 L1 11 Q0 11 0 10 Z" fill="#c6c6c6"/></svg>
<div class="t" style="left:44px;top:414px;">2D Sprite</div>
<svg style="left:15px;top:433px" width="9" height="10" viewBox="0 0 9 10"><path d="M0.5 0.5 L8 5 L0.5 9.5 Z" fill="#6f6f6f"/></svg>
<svg style="left:28px;top:433px" width="13" height="11" viewBox="0 0 13 11"><path d="M0 1 Q0 0 1 0 L4.5 0 L5.7 1.5 L12 1.5 Q13 1.5 13 2.5 L13 10 Q13 11 12 11 L1 11 Q0 11 0 10 Z" fill="#c6c6c6"/></svg>
<div class="t" style="left:44px;top:430px;">2D SpriteShape</div>
<svg style="left:15px;top:449px" width="9" height="10" viewBox="0 0 9 10"><path d="M0.5 0.5 L8 5 L0.5 9.5 Z" fill="#6f6f6f"/></svg>
<svg style="left:28px;top:449px" width="13" height="11" viewBox="0 0 13 11"><path d="M0 1 Q0 0 1 0 L4.5 0 L5.7 1.5 L12 1.5 Q13 1.5 13 2.5 L13 10 Q13 11 12 11 L1 11 Q0 11 0 10 Z" fill="#c6c6c6"/></svg>
<div class="t" style="left:44px;top:446px;">2D Tilemap Editor</div>
<svg style="left:15px;top:465px" width="9" height="10" viewBox="0 0 9 10"><path d="M0.5 0.5 L8 5 L0.5 9.5 Z" fill="#6f6f6f"/></svg>
<svg style="left:28px;top:465px" width="13" height="11" viewBox="0 0 13 11"><path d="M0 1 Q0 0 1 0 L4.5 0 L5.7 1.5 L12 1.5 Q13 1.5 13 2.5 L13 10 Q13 11 12 11 L1 11 Q0 11 0 10 Z" fill="#c6c6c6"/></svg>
<div class="t" style="left:44px;top:462px;">2D Tilemap Extras</div>
<svg style="left:15px;top:481px" width="9" height="10" viewBox="0 0 9 10"><path d="M0.5 0.5 L8 5 L0.5 9.5 Z" fill="#6f6f6f"/></svg>
<svg style="left:28px;top:481px" width="13" height="11" viewBox="0 0 13 11"><path d="M0 1 Q0 0 1 0 L4.5 0 L5.7 1.5 L12 1.5 Q13 1.5 13 2.5 L13 10 Q13 11 12 11 L1 11 Q0 11 0 10 Z" fill="#c6c6c6"/></svg>
<div class="t" style="left:44px;top:478px;">Burst</div>
<svg style="left:15px;top:497px" width="9" height="10" viewBox="0 0 9 10"><path d="M0.5 0.5 L8 5 L0.5 9.5 Z" fill="#6f6f6f"/></svg>
<svg style="left:28px;top:497px" width="13" height="11" viewBox="0 0 13 11"><path d="M0 1 Q0 0 1 0 L4.5 0 L5.7 1.5 L12 1.5 Q13 1.5 13 2.5 L13 10 Q13 11 12 11 L1 11 Q0 11 0 10 Z" fill="#c6c6c6"/></svg>
<div class="t" style="left:44px;top:494px;">Collections</div>
</div></div>
  <!-- bottom bar -->
  <div class="a" style="left:204px;top:523px;width:442px;height:22px;background:#3e3e3e"></div>
  <div class="a" style="left:575px;top:533px;width:55px;height:2px;background:#7a7a7a"></div>
  <div class="a" style="left:601px;top:529px;width:11px;height:11px;border-radius:50%;background:#a9a9a9"></div>
</div>

<!-- ================= ANIMATION PANEL ================= -->
<div class="s" style="left:648px;top:736px;width:1301px;height:545px;background:#383838">
  <div class="a" style="left:0;top:0;width:1301px;height:19px;background:#262626;border-radius:4px 4px 0 0"></div>
  <!-- console tab -->
  <svg style="left:9px;top:4px" width="11" height="11" viewBox="0 0 11 11"><rect x="0" y="0" width="11" height="11" rx="1.5" fill="#d4d4d4"/><path d="M2 2.5 H8 M2 4.5 H9 M2 6.5 H8 M2 8.5 H9" stroke="#262626" stroke-width="1"/></svg>
  <div class="t" style="left:24px;top:3px;font-size:12.5px;color:#cfcfcf">Console</div>
  <!-- animation tab -->
  <div class="a" style="left:89px;top:0;width:96px;height:19px;background:#3c3c3c"></div>
  <div class="a" style="left:89px;top:0;width:96px;height:2px;background:#3a72b0"></div>
  <svg style="left:96px;top:4px" width="12" height="12" viewBox="0 0 12 12"><circle cx="6" cy="6" r="6" fill="#d4d4d4"/><path d="M5.5 2 V6.5 H9" fill="none" stroke="#3c3c3c" stroke-width="1.3"/></svg>
  <div class="t" style="left:112px;top:3px;font-size:12.5px;color:#dadada">Animation</div>
  <svg style="left:1266px;top:4px" width="10" height="11" viewBox="0 0 10 11"><path d="M1.5 10.5 V6 H8.5 V10.5 Z M3 6 V3.5 A2 2 0 0 1 7 3.5" fill="none" stroke="#c8c8c8" stroke-width="1"/></svg>
  <div class="a" style="left:1287px;top:5px;width:2px;height:2px;background:#ddd"></div>
  <div class="a" style="left:1287px;top:9px;width:2px;height:2px;background:#ddd"></div>
  <div class="a" style="left:1287px;top:13px;width:2px;height:2px;background:#ddd"></div>

  <!-- left controls -->
  <div class="a" style="left:0;top:19px;width:325px;height:20px;background:#3c3c3c"></div>
  <div class="a" style="left:0;top:39px;width:325px;height:1px;background:#2a2a2a"></div>
  <div class="a" style="left:0;top:40px;width:325px;height:20px;background:#3c3c3c"></div>
  <div class="a" style="left:0;top:60px;width:325px;height:1px;background:#2a2a2a"></div>
  <div class="t" style="left:4px;top:22px;font-size:12.5px;color:#868686">Preview</div>
  <div class="a" style="left:56px;top:19px;width:1px;height:20px;background:#2e2e2e"></div>
  <div class="a" style="left:82px;top:19px;width:1px;height:20px;background:#2e2e2e"></div>
  <div class="a" style="left:107px;top:19px;width:1px;height:20px;background:#2e2e2e"></div>
  <div class="a" style="left:133px;top:19px;width:1px;height:20px;background:#2e2e2e"></div>
  <div class="a" style="left:159px;top:19px;width:1px;height:20px;background:#2e2e2e"></div>
  <div class="a" style="left:185px;top:19px;width:1px;height:20px;background:#2e2e2e"></div>
  <div class="a" style="left:211px;top:19px;width:1px;height:20px;background:#2e2e2e"></div>
  <svg style="left:60px;top:22px" width="16" height="16" viewBox="0 0 16 16"><circle cx="8" cy="8" r="6.5" fill="none" stroke="#8a8a8a" stroke-width="1.2"/><circle cx="8" cy="8" r="4.4" fill="#b9563a"/></svg>
  <svg style="left:87px;top:22px" width="16" height="14" viewBox="0 0 16 14"><path d="M1.5 2 V12" stroke="#9a9a9a" stroke-width="1.6"/><path d="M8 2 L2.5 7 L8 12 Z M14 2 L8.5 7 L14 12 Z" fill="#9a9a9a"/></svg>
  <svg style="left:113px;top:22px" width="16" height="14" viewBox="0 0 16 14"><path d="M3.5 2 V12" stroke="#9a9a9a" stroke-width="1.8"/><path d="M12 2 L5 7 L12 12 Z" fill="#9a9a9a"/></svg>
  <svg style="left:139px;top:22px" width="16" height="14" viewBox="0 0 16 14"><path d="M4.5 2 L12 7 L4.5 12 Z" fill="#9a9a9a"/></svg>
  <svg style="left:165px;top:22px" width="16" height="14" viewBox="0 0 16 14"><path d="M12.5 2 V12" stroke="#9a9a9a" stroke-width="1.8"/><path d="M4 2 L11 7 L4 12 Z" fill="#9a9a9a"/></svg>
  <svg style="left:190px;top:22px" width="16" height="14" viewBox="0 0 16 14"><path d="M14.5 2 V12" stroke="#9a9a9a" stroke-width="1.6"/><path d="M2 2 L7.5 7 L2 12 Z M8 2 L13.5 7 L8 12 Z" fill="#9a9a9a"/></svg>
  <div class="a" style="left:288px;top:21px;width:34px;height:16px;border-radius:3px;background:#2e2e2e;box-shadow:inset 0 0 0 1px #262626"></div>
  <div class="t" style="left:290px;top:21px;font-size:12.5px;color:#a0a0a0">0</div>

  <div class="t" style="left:3px;top:43px;font-size:12.5px;color:#8a8a8a">[No Clip]</div>
  <svg style="left:192px;top:48px" width="8" height="6" viewBox="0 0 8 6"><path d="M0 0 H8 L4 5 Z" fill="#8a8a8a"/></svg>
  <div class="a" style="left:204px;top:40px;width:1px;height:20px;background:#2e2e2e"></div>
  <div class="a" style="left:246px;top:40px;width:1px;height:20px;background:#2e2e2e"></div>
  <div class="a" style="left:272px;top:40px;width:1px;height:20px;background:#2e2e2e"></div>
  <div class="a" style="left:298px;top:40px;width:1px;height:20px;background:#2e2e2e"></div>
  <svg style="left:252px;top:44px" width="12" height="12" viewBox="0 0 12 12"><circle cx="6" cy="6" r="3.8" fill="none" stroke="#a8a8a8" stroke-width="1.1"/><circle cx="6" cy="6" r="0.9" fill="#a8a8a8"/><path d="M6 0 V2.5 M6 9.5 V12 M0 6 H2.5 M9.5 6 H12" stroke="#a8a8a8" stroke-width="1.1"/></svg>
  <svg style="left:277px;top:43px" width="16" height="14" viewBox="0 0 16 14"><path d="M5 1.5 L9.2 5.7 L5 10 L0.8 5.7 Z" fill="#a0a0a0"/><path d="M11 7.5 V13 M8.3 10.2 H13.8" stroke="#b0b0b0" stroke-width="1.1"/></svg>
  <svg style="left:303px;top:42px" width="16" height="15" viewBox="0 0 16 15"><path d="M2.5 1 H6 V11 L4.25 13 L2.5 11 Z" fill="#a0a0a0"/><path d="M11 8 V13.5 M8.3 10.8 H13.8" stroke="#b0b0b0" stroke-width="1.1"/></svg>
  <div class="a" style="left:325px;top:19px;width:1px;height:526px;background:#232323"></div>

  <!-- timeline ruler -->
  <div class="a" style="left:326px;top:19px;width:961px;height:20px;background:#3c3c3c"></div>
  <div class="a" style="left:326px;top:39px;width:961px;height:1px;background:#262626"></div>
  <div class="a" style="left:326px;top:40px;width:961px;height:20px;background:#313131"></div>
  <div class="a" style="left:1287px;top:19px;width:14px;height:41px;background:#3c3c3c"></div>
  <div class="a" style="left:1287px;top:19px;width:1px;height:21px;background:#303030"></div>
  <svg style="left:1290px;top:24px" width="8" height="12" viewBox="0 0 8 12"><path d="M4 0 L6 2 L4 4 L2 2 Z" fill="#aaa"/><rect x="2.5" y="5" width="3" height="2" fill="#aaa"/><rect x="2.5" y="8.5" width="3" height="2" fill="#aaa"/></svg>
  <div class="a" style="left:363.5px;top:27px;width:2px;height:12px;background:#dcdcdc"></div>
<div class="t" style="left:368.0px;top:23px;font-size:11px;line-height:12px;color:#8c8c8c">0:00</div>
<div class="a" style="left:378.7px;top:35px;width:1px;height:4px;background:#a0a0a0"></div>
<div class="a" style="left:393.4px;top:35px;width:1px;height:4px;background:#a0a0a0"></div>
<div class="a" style="left:408.1px;top:35px;width:1px;height:4px;background:#a0a0a0"></div>
<div class="a" style="left:422.9px;top:35px;width:1px;height:4px;background:#a0a0a0"></div>
<div class="a" style="left:437.1px;top:27px;width:2px;height:12px;background:#dcdcdc"></div>
<div class="t" style="left:441.6px;top:23px;font-size:11px;line-height:12px;color:#8c8c8c">0:05</div>
<div class="a" style="left:452.3px;top:35px;width:1px;height:4px;background:#a0a0a0"></div>
<div class="a" style="left:467.0px;top:35px;width:1px;height:4px;background:#a0a0a0"></div>
<div class="a" style="left:481.7px;top:35px;width:1px;height:4px;background:#a0a0a0"></div>
<div class="a" style="left:496.4px;top:35px;width:1px;height:4px;background:#a0a0a0"></div>
<div class="a" style="left:510.7px;top:27px;width:2px;height:12px;background:#dcdcdc"></div>
<div class="t" style="left:515.2px;top:23px;font-size:11px;line-height:12px;color:#8c8c8c">0:10</div>
<div class="a" style="left:525.9px;top:35px;width:1px;height:4px;background:#a0a0a0"></div>
<div class="a" style="left:540.6px;top:35px;width:1px;height:4px;background:#a0a0a0"></div>
<div class="a" style="left:555.3px;top:35px;width:1px;height:4px;background:#a0a0a0"></div>
<div class="a" style="left:570.0px;top:35px;width:1px;height:4px;background:#a0a0a0"></div>
<div class="a" style="left:584.2px;top:27px;width:2px;height:12px;background:#dcdcdc"></div>
<div class="t" style="left:588.7px;top:23px;font-size:11px;line-height:12px;color:#8c8c8c">0:15</div>
<div class="a" style="left:599.5px;top:35px;width:1px;height:4px;background:#a0a0a0"></div>
<div class="a" style="left:614.2px;top:35px;width:1px;height:4px;background:#a0a0a0"></div>
<div class="a" style="left:628.9px;top:35px;width:1px;height:4px;background:#a0a0a0"></div>
<div class="a" style="left:643.6px;top:35px;width:1px;height:4px;background:#a0a0a0"></div>
<div class="a" style="left:657.8px;top:27px;width:2px;height:12px;background:#dcdcdc"></div>
<div class="t" style="left:662.3px;top:23px;font-size:11px;line-height:12px;color:#8c8c8c">0:20</div>
<div class="a" style="left:673.0px;top:35px;width:1px;height:4px;background:#a0a0a0"></div>
<div class="a" style="left:687.8px;top:35px;width:1px;height:4px;background:#a0a0a0"></div>
<div class="a" style="left:702.5px;top:35px;width:1px;height:4px;background:#a0a0a0"></div>
<div class="a" style="left:717.2px;top:35px;width:1px;height:4px;background:#a0a0a0"></div>
<div class="a" style="left:731.4px;top:27px;width:2px;height:12px;background:#dcdcdc"></div>
<div class="t" style="left:735.9px;top:23px;font-size:11px;line-height:12px;color:#8c8c8c">0:25</div>
<div class="a" style="left:746.6px;top:35px;width:1px;height:4px;background:#a0a0a0"></div>
<div class="a" style="left:761.3px;top:35px;width:1px;height:4px;background:#a0a0a0"></div>
<div class="a" style="left:776.0px;top:35px;width:1px;height:4px;background:#a0a0a0"></div>
<div class="a" style="left:790.8px;top:35px;width:1px;height:4px;background:#a0a0a0"></div>
<div class="a" style="left:805.0px;top:27px;width:2px;height:12px;background:#dcdcdc"></div>
<div class="t" style="left:809.5px;top:23px;font-size:11px;line-height:12px;color:#8c8c8c">0:30</div>
<div class="a" style="left:820.2px;top:35px;width:1px;height:4px;background:#a0a0a0"></div>
<div class="a" style="left:834.9px;top:35px;width:1px;height:4px;background:#a0a0a0"></div>
<div class="a" style="left:849.6px;top:35px;width:1px;height:4px;background:#a0a0a0"></div>
<div class="a" style="left:864.3px;top:35px;width:1px;height:4px;background:#a0a0a0"></div>
<div class="a" style="left:878.6px;top:27px;width:2px;height:12px;background:#dcdcdc"></div>
<div class="t" style="left:883.1px;top:23px;font-size:11px;line-height:12px;color:#8c8c8c">0:35</div>
<div class="a" style="left:893.8px;top:35px;width:1px;height:4px;background:#a0a0a0"></div>
<div class="a" style="left:908.5px;top:35px;width:1px;height:4px;background:#a0a0a0"></div>
<div class="a" style="left:923.2px;top:35px;width:1px;height:4px;background:#a0a0a0"></div>
<div class="a" style="left:937.9px;top:35px;width:1px;height:4px;background:#a0a0a0"></div>
<div class="a" style="left:952.1px;top:27px;width:2px;height:12px;background:#dcdcdc"></div>
<div class="t" style="left:956.6px;top:23px;font-size:11px;line-height:12px;color:#8c8c8c">0:40</div>
<div class="a" style="left:967.4px;top:35px;width:1px;height:4px;background:#a0a0a0"></div>
<div class="a" style="left:982.1px;top:35px;width:1px;height:4px;background:#a0a0a0"></div>
<div class="a" style="left:996.8px;top:35px;width:1px;height:4px;background:#a0a0a0"></div>
<div class="a" style="left:1011.5px;top:35px;width:1px;height:4px;background:#a0a0a0"></div>
<div class="a" style="left:1025.7px;top:27px;width:2px;height:12px;background:#dcdcdc"></div>
<div class="t" style="left:1030.2px;top:23px;font-size:11px;line-height:12px;color:#8c8c8c">0:45</div>
<div class="a" style="left:1040.9px;top:35px;width:1px;height:4px;background:#a0a0a0"></div>
<div class="a" style="left:1055.7px;top:35px;width:1px;height:4px;background:#a0a0a0"></div>
<div class="a" style="left:1070.4px;top:35px;width:1px;height:4px;background:#a0a0a0"></div>
<div class="a" style="left:1085.1px;top:35px;width:1px;height:4px;background:#a0a0a0"></div>
<div class="a" style="left:1099.3px;top:27px;width:2px;height:12px;background:#dcdcdc"></div>
<div class="t" style="left:1103.8px;top:23px;font-size:11px;line-height:12px;color:#8c8c8c">0:50</div>
<div class="a" style="left:1114.5px;top:35px;width:1px;height:4px;background:#a0a0a0"></div>
<div class="a" style="left:1129.2px;top:35px;width:1px;height:4px;background:#a0a0a0"></div>
<div class="a" style="left:1143.9px;top:35px;width:1px;height:4px;background:#a0a0a0"></div>
<div class="a" style="left:1158.7px;top:35px;width:1px;height:4px;background:#a0a0a0"></div>
<div class="a" style="left:1172.9px;top:27px;width:2px;height:12px;background:#dcdcdc"></div>
<div class="t" style="left:1177.4px;top:23px;font-size:11px;line-height:12px;color:#8c8c8c">0:55</div>
<div class="a" style="left:1188.1px;top:35px;width:1px;height:4px;background:#a0a0a0"></div>
<div class="a" style="left:1202.8px;top:35px;width:1px;height:4px;background:#a0a0a0"></div>
<div class="a" style="left:1217.5px;top:35px;width:1px;height:4px;background:#a0a0a0"></div>
<div class="a" style="left:1232.2px;top:35px;width:1px;height:4px;background:#a0a0a0"></div>
<div class="a" style="left:1246.5px;top:27px;width:2px;height:12px;background:#dcdcdc"></div>
<div class="t" style="left:1251.0px;top:23px;font-size:11px;line-height:12px;color:#8c8c8c">1:00</div>
<div class="a" style="left:1261.7px;top:35px;width:1px;height:4px;background:#a0a0a0"></div>
<div class="a" style="left:1276.4px;top:35px;width:1px;height:4px;background:#a0a0a0"></div>

  <!-- bottom tabs -->
  <div class="a" style="left:0;top:523px;width:325px;height:1px;background:#2a2a2a"></div>
  <div class="a" style="left:0;top:524px;width:325px;height:21px;background:#383838"></div>
  <div class="a" style="left:165px;top:524px;width:79px;height:21px;background:#414141"></div>
  <div class="a" style="left:244px;top:524px;width:1px;height:21px;background:#2e2e2e"></div>
  <div class="t" style="left:165px;width:79px;text-align:center;top:527px;font-size:12.5px;color:#959595">Dopesheet</div>
  <div class="t" style="left:245px;width:80px;text-align:center;top:527px;font-size:12.5px;color:#959595">Curves</div>

  <!-- create box -->
  <div class="t" style="left:630px;width:353px;text-align:center;top:288px;font-size:12.6px;color:#c4c4c4">To begin animating Player, create an Animation Clip.</div>
  <div class="a" style="left:772px;top:308px;width:68px;height:18px;border-radius:3px;background:#46607c;box-shadow:0 0 0 1px #1e1e1e"></div>
  <div class="t" style="left:772px;width:68px;text-align:center;top:310px;font-size:12.5px;color:#e4e4e4">Create</div>
</div>
<div class="a" style="left:1949px;top:0;width:3px;height:1281px;background:#1e1e1e"></div>
<div class="a" style="left:0;top:1280px;width:1952px;height:1px;background:#1c1c1c"></div>

<!-- ================= ANNOTATIONS ================= -->
<svg style="left:0;top:0" width="1952" height="1281">
  <g fill="none" stroke="#3aabee" stroke-width="3">
    <rect x="34.5" y="8.5" width="153" height="36"/>
    <rect x="14.5" y="861.5" width="152" height="34"/>
    <rect x="1281.5" y="992.5" width="352" height="95"/>
  </g>
  <line x1="135" y1="65" x2="135" y2="818" stroke="#3aabee" stroke-width="6" stroke-linecap="round"/>
  <path d="M126 816 L135 819 L144 816 L135 836 Z" fill="#3aabee"/>
  <line x1="186" y1="887.3" x2="1246" y2="1073" stroke="#3aabee" stroke-width="6" stroke-linecap="round"/>
  <path d="M1243 1064 L1244 1073 L1240 1081 L1261 1075.7 Z" fill="#3aabee"/>
  <line x1="1403" y1="676" x2="1474" y2="676" stroke="#3aabee" stroke-width="6" stroke-linecap="round"/>
  <path d="M1405 667 L1402 676 L1405 685 L1385.5 676 Z" fill="#3aabee"/>
</svg>

</body></html>
